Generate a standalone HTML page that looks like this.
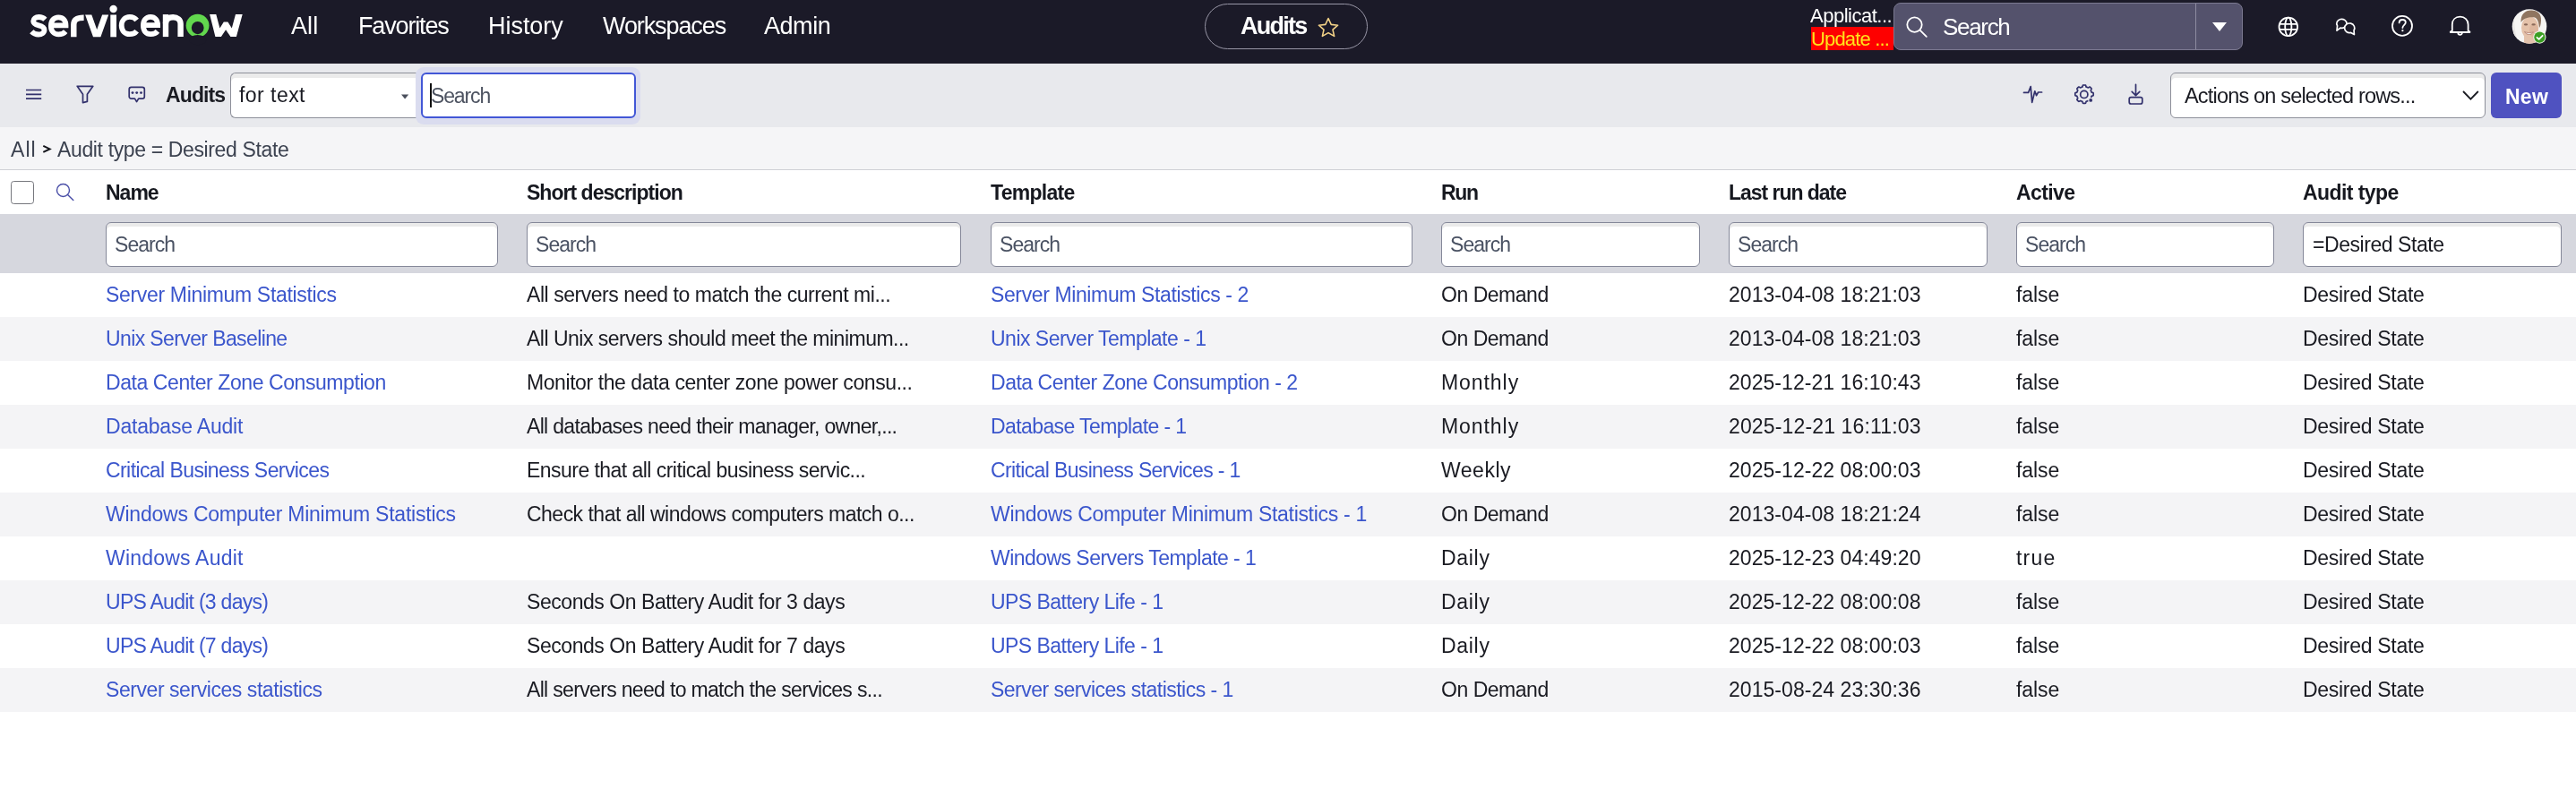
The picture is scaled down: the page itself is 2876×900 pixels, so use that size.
<!DOCTYPE html><html><head><meta charset="utf-8"><style>
html,body{margin:0;padding:0;width:2876px;height:900px;overflow:hidden;background:#fff;font-family:"Liberation Sans",sans-serif;}
.t{position:absolute;white-space:nowrap;will-change:transform;}
.r{position:absolute;box-sizing:border-box;}
svg.ov{position:absolute;left:0;top:0;overflow:visible;}
</style></head><body>
<div class="r" style="left:0px;top:0px;width:2876px;height:71px;background:#1b1a28"></div>
<div class="t" style="left:325px;top:16.1px;font-size:27px;line-height:27px;color:#fff;font-weight:normal;letter-spacing:0.100px;">All</div>
<div class="t" style="left:400.4px;top:16.1px;font-size:27px;line-height:27px;color:#fff;font-weight:normal;letter-spacing:-1.150px;">Favorites</div>
<div class="t" style="left:545.4px;top:16.1px;font-size:27px;line-height:27px;color:#fff;font-weight:normal;letter-spacing:-0.033px;">History</div>
<div class="t" style="left:672.7px;top:16.1px;font-size:27px;line-height:27px;color:#fff;font-weight:normal;letter-spacing:-1.100px;">Workspaces</div>
<div class="t" style="left:853px;top:16.1px;font-size:27px;line-height:27px;color:#fff;font-weight:normal;letter-spacing:-0.450px;">Admin</div>
<div class="r" style="left:1345px;top:4px;width:182px;height:51px;border:1.2px solid #9896a6;border-radius:26px;"></div>
<div class="t" style="left:1384.5px;top:16.1px;font-size:27px;line-height:27px;color:#fff;font-weight:bold;letter-spacing:-1.760px;">Audits</div>
<div class="t" style="left:2021px;top:6.7px;font-size:22px;line-height:22px;color:#fff;font-weight:normal;letter-spacing:-0.490px;">Applicat...</div>
<div class="r" style="left:2022px;top:30px;width:92px;height:26px;background:#fe0000"></div>
<div class="t" style="left:2022px;top:32.9px;font-size:22px;line-height:22px;color:#ffe41a;font-weight:normal;letter-spacing:-0.833px;">Update ...</div>
<div class="r" style="left:2114px;top:3px;width:390px;height:53px;background:#54526c;border:1px solid #7b7990;border-radius:8px;"></div>
<div class="r" style="left:2451px;top:4px;width:1.2px;height:51px;background:#8d8ba0"></div>
<div class="t" style="left:2169px;top:17.3px;font-size:26px;line-height:26px;color:#fff;font-weight:normal;letter-spacing:-1.320px;">Search</div>
<div class="r" style="left:0px;top:71px;width:2876px;height:71px;background:#e8e9ed"></div>
<div class="t" style="left:184.5px;top:95.2px;font-size:23px;line-height:23px;color:#1a1b22;font-weight:bold;letter-spacing:-0.880px;">Audits</div>
<div class="r" style="left:257px;top:81px;width:214px;height:51px;background:#fff;border:1px solid #8d8f99;border-right:none;border-radius:6px 0 0 6px;box-shadow:inset 0 5px 0 #ebebeb;"></div>
<div class="t" style="left:267px;top:95.2px;font-size:23px;line-height:23px;color:#1a1b22;font-weight:normal;letter-spacing:0.457px;">for text</div>
<div class="r" style="left:464px;top:75px;width:251px;height:64px;border-radius:9px;background:#dadcef"></div>
<div class="r" style="left:470px;top:81px;width:240px;height:51px;background:#fff;border:2.5px solid #4257d6;border-radius:6px;"></div>
<div class="r" style="left:480px;top:93px;width:2px;height:27px;background:#111"></div>
<div class="t" style="left:481px;top:96.0px;font-size:23px;line-height:23px;color:#4d5361;font-weight:normal;letter-spacing:-1.140px;">Search</div>
<div class="r" style="left:2423px;top:81px;width:352px;height:51px;background:#fff;border:1px solid #8d8f99;border-radius:6px;box-shadow:inset 0 5px 0 #ebebeb;"></div>
<div class="t" style="left:2439px;top:96.1px;font-size:23.5px;line-height:23.5px;color:#1a1b22;font-weight:normal;letter-spacing:-0.819px;">Actions on selected rows...</div>
<div class="r" style="left:2781px;top:81px;width:79px;height:51px;background:#4f52c0;border-radius:6px;"></div>
<div class="t" style="left:2797px;top:96.5px;font-size:23px;line-height:23px;color:#fff;font-weight:bold;letter-spacing:0.250px;">New</div>
<div class="r" style="left:0px;top:142px;width:2876px;height:47px;background:#f5f5f7"></div>
<div class="r" style="left:0px;top:189px;width:2876px;height:1px;background:#cfd0d6"></div>
<div class="t" style="left:11.5px;top:155.5px;font-size:23px;line-height:23px;color:#3c4250;font-weight:normal;letter-spacing:1.050px;">All</div>
<div class="t" style="left:64.3px;top:155.5px;font-size:23px;line-height:23px;color:#3c4250;font-weight:normal;letter-spacing:-0.364px;">Audit type = Desired State</div>
<div class="r" style="left:12px;top:202px;width:26px;height:26px;background:#fff;border:1.5px solid #76777d;border-radius:3.5px;"></div>
<div class="t" style="left:117.5px;top:204.4px;font-size:23px;line-height:23px;color:#16181f;font-weight:bold;letter-spacing:-1.000px;">Name</div>
<div class="t" style="left:587.5px;top:204.4px;font-size:23px;line-height:23px;color:#16181f;font-weight:bold;letter-spacing:-0.975px;">Short description</div>
<div class="t" style="left:1105.5px;top:204.4px;font-size:23px;line-height:23px;color:#16181f;font-weight:bold;letter-spacing:-0.700px;">Template</div>
<div class="t" style="left:1608.5px;top:204.4px;font-size:23px;line-height:23px;color:#16181f;font-weight:bold;letter-spacing:-1.350px;">Run</div>
<div class="t" style="left:1929.5px;top:204.4px;font-size:23px;line-height:23px;color:#16181f;font-weight:bold;letter-spacing:-1.033px;">Last run date</div>
<div class="t" style="left:2250.5px;top:204.4px;font-size:23px;line-height:23px;color:#16181f;font-weight:bold;letter-spacing:-0.600px;">Active</div>
<div class="t" style="left:2570.5px;top:204.4px;font-size:23px;line-height:23px;color:#16181f;font-weight:bold;letter-spacing:-0.578px;">Audit type</div>
<div class="r" style="left:0px;top:239px;width:2876px;height:66px;background:#d6d7de"></div>
<div class="r" style="left:118px;top:248px;width:438px;height:50px;background:#fff;border:1px solid #858899;border-radius:6px;box-shadow:inset 0 4px 0 #ebebeb;"></div>
<div class="t" style="left:128px;top:262.1px;font-size:23px;line-height:23px;color:#4a5263;font-weight:normal;letter-spacing:-0.960px;">Search</div>
<div class="r" style="left:588px;top:248px;width:485px;height:50px;background:#fff;border:1px solid #858899;border-radius:6px;box-shadow:inset 0 4px 0 #ebebeb;"></div>
<div class="t" style="left:598px;top:262.1px;font-size:23px;line-height:23px;color:#4a5263;font-weight:normal;letter-spacing:-0.960px;">Search</div>
<div class="r" style="left:1106px;top:248px;width:471px;height:50px;background:#fff;border:1px solid #858899;border-radius:6px;box-shadow:inset 0 4px 0 #ebebeb;"></div>
<div class="t" style="left:1116px;top:262.1px;font-size:23px;line-height:23px;color:#4a5263;font-weight:normal;letter-spacing:-0.960px;">Search</div>
<div class="r" style="left:1609px;top:248px;width:289px;height:50px;background:#fff;border:1px solid #858899;border-radius:6px;box-shadow:inset 0 4px 0 #ebebeb;"></div>
<div class="t" style="left:1619px;top:262.1px;font-size:23px;line-height:23px;color:#4a5263;font-weight:normal;letter-spacing:-0.960px;">Search</div>
<div class="r" style="left:1930px;top:248px;width:289px;height:50px;background:#fff;border:1px solid #858899;border-radius:6px;box-shadow:inset 0 4px 0 #ebebeb;"></div>
<div class="t" style="left:1940px;top:262.1px;font-size:23px;line-height:23px;color:#4a5263;font-weight:normal;letter-spacing:-0.960px;">Search</div>
<div class="r" style="left:2251px;top:248px;width:288px;height:50px;background:#fff;border:1px solid #858899;border-radius:6px;box-shadow:inset 0 4px 0 #ebebeb;"></div>
<div class="t" style="left:2261px;top:262.1px;font-size:23px;line-height:23px;color:#4a5263;font-weight:normal;letter-spacing:-0.960px;">Search</div>
<div class="r" style="left:2571px;top:248px;width:289px;height:50px;background:#fff;border:1px solid #858899;border-radius:6px;box-shadow:inset 0 4px 0 #ebebeb;"></div>
<div class="t" style="left:2581.5px;top:262.1px;font-size:23px;line-height:23px;color:#1a1b22;font-weight:normal;letter-spacing:-0.446px;">=Desired State</div>
<div class="t" style="left:117.5px;top:318.0px;font-size:23px;line-height:23px;color:#3b56cc;font-weight:normal;letter-spacing:-0.329px;">Server Minimum Statistics</div>
<div class="t" style="left:587.5px;top:318.0px;font-size:23px;line-height:23px;color:#1a1b22;font-weight:normal;letter-spacing:-0.452px;">All servers need to match the current mi...</div>
<div class="t" style="left:1105.5px;top:318.0px;font-size:23px;line-height:23px;color:#3b56cc;font-weight:normal;letter-spacing:-0.382px;">Server Minimum Statistics - 2</div>
<div class="t" style="left:1608.5px;top:318.0px;font-size:23px;line-height:23px;color:#1a1b22;font-weight:normal;letter-spacing:-0.475px;">On Demand</div>
<div class="t" style="left:1929.5px;top:318.0px;font-size:23px;line-height:23px;color:#1a1b22;font-weight:normal;letter-spacing:0.050px;">2013-04-08 18:21:03</div>
<div class="t" style="left:2250.5px;top:318.0px;font-size:23px;line-height:23px;color:#1a1b22;font-weight:normal;letter-spacing:-0.100px;">false</div>
<div class="t" style="left:2570.5px;top:318.0px;font-size:23px;line-height:23px;color:#1a1b22;font-weight:normal;letter-spacing:-0.292px;">Desired State</div>
<div class="r" style="left:0px;top:354px;width:2876px;height:49px;background:#f4f4f6"></div>
<div class="t" style="left:117.5px;top:367.0px;font-size:23px;line-height:23px;color:#3b56cc;font-weight:normal;letter-spacing:-0.611px;">Unix Server Baseline</div>
<div class="t" style="left:587.5px;top:367.0px;font-size:23px;line-height:23px;color:#1a1b22;font-weight:normal;letter-spacing:-0.510px;">All Unix servers should meet the minimum...</div>
<div class="t" style="left:1105.5px;top:367.0px;font-size:23px;line-height:23px;color:#3b56cc;font-weight:normal;letter-spacing:-0.509px;">Unix Server Template - 1</div>
<div class="t" style="left:1608.5px;top:367.0px;font-size:23px;line-height:23px;color:#1a1b22;font-weight:normal;letter-spacing:-0.475px;">On Demand</div>
<div class="t" style="left:1929.5px;top:367.0px;font-size:23px;line-height:23px;color:#1a1b22;font-weight:normal;letter-spacing:0.050px;">2013-04-08 18:21:03</div>
<div class="t" style="left:2250.5px;top:367.0px;font-size:23px;line-height:23px;color:#1a1b22;font-weight:normal;letter-spacing:-0.100px;">false</div>
<div class="t" style="left:2570.5px;top:367.0px;font-size:23px;line-height:23px;color:#1a1b22;font-weight:normal;letter-spacing:-0.292px;">Desired State</div>
<div class="t" style="left:117.5px;top:416.0px;font-size:23px;line-height:23px;color:#3b56cc;font-weight:normal;letter-spacing:-0.426px;">Data Center Zone Consumption</div>
<div class="t" style="left:587.5px;top:416.0px;font-size:23px;line-height:23px;color:#1a1b22;font-weight:normal;letter-spacing:-0.424px;">Monitor the data center zone power consu...</div>
<div class="t" style="left:1105.5px;top:416.0px;font-size:23px;line-height:23px;color:#3b56cc;font-weight:normal;letter-spacing:-0.481px;">Data Center Zone Consumption - 2</div>
<div class="t" style="left:1608.5px;top:416.0px;font-size:23px;line-height:23px;color:#1a1b22;font-weight:normal;letter-spacing:0.933px;">Monthly</div>
<div class="t" style="left:1929.5px;top:416.0px;font-size:23px;line-height:23px;color:#1a1b22;font-weight:normal;letter-spacing:0.050px;">2025-12-21 16:10:43</div>
<div class="t" style="left:2250.5px;top:416.0px;font-size:23px;line-height:23px;color:#1a1b22;font-weight:normal;letter-spacing:-0.100px;">false</div>
<div class="t" style="left:2570.5px;top:416.0px;font-size:23px;line-height:23px;color:#1a1b22;font-weight:normal;letter-spacing:-0.292px;">Desired State</div>
<div class="r" style="left:0px;top:452px;width:2876px;height:49px;background:#f4f4f6"></div>
<div class="t" style="left:117.5px;top:465.0px;font-size:23px;line-height:23px;color:#3b56cc;font-weight:normal;letter-spacing:-0.200px;">Database Audit</div>
<div class="t" style="left:587.5px;top:465.0px;font-size:23px;line-height:23px;color:#1a1b22;font-weight:normal;letter-spacing:-0.676px;">All databases need their manager, owner,...</div>
<div class="t" style="left:1105.5px;top:465.0px;font-size:23px;line-height:23px;color:#3b56cc;font-weight:normal;letter-spacing:-0.595px;">Database Template - 1</div>
<div class="t" style="left:1608.5px;top:465.0px;font-size:23px;line-height:23px;color:#1a1b22;font-weight:normal;letter-spacing:0.933px;">Monthly</div>
<div class="t" style="left:1929.5px;top:465.0px;font-size:23px;line-height:23px;color:#1a1b22;font-weight:normal;letter-spacing:0.144px;">2025-12-21 16:11:03</div>
<div class="t" style="left:2250.5px;top:465.0px;font-size:23px;line-height:23px;color:#1a1b22;font-weight:normal;letter-spacing:-0.100px;">false</div>
<div class="t" style="left:2570.5px;top:465.0px;font-size:23px;line-height:23px;color:#1a1b22;font-weight:normal;letter-spacing:-0.292px;">Desired State</div>
<div class="t" style="left:117.5px;top:514.0px;font-size:23px;line-height:23px;color:#3b56cc;font-weight:normal;letter-spacing:-0.584px;">Critical Business Services</div>
<div class="t" style="left:587.5px;top:514.0px;font-size:23px;line-height:23px;color:#1a1b22;font-weight:normal;letter-spacing:-0.540px;">Ensure that all critical business servic...</div>
<div class="t" style="left:1105.5px;top:514.0px;font-size:23px;line-height:23px;color:#3b56cc;font-weight:normal;letter-spacing:-0.638px;">Critical Business Services - 1</div>
<div class="t" style="left:1608.5px;top:514.0px;font-size:23px;line-height:23px;color:#1a1b22;font-weight:normal;letter-spacing:0.520px;">Weekly</div>
<div class="t" style="left:1929.5px;top:514.0px;font-size:23px;line-height:23px;color:#1a1b22;font-weight:normal;letter-spacing:0.050px;">2025-12-22 08:00:03</div>
<div class="t" style="left:2250.5px;top:514.0px;font-size:23px;line-height:23px;color:#1a1b22;font-weight:normal;letter-spacing:-0.100px;">false</div>
<div class="t" style="left:2570.5px;top:514.0px;font-size:23px;line-height:23px;color:#1a1b22;font-weight:normal;letter-spacing:-0.292px;">Desired State</div>
<div class="r" style="left:0px;top:550px;width:2876px;height:49px;background:#f4f4f6"></div>
<div class="t" style="left:117.5px;top:563.0px;font-size:23px;line-height:23px;color:#3b56cc;font-weight:normal;letter-spacing:-0.226px;">Windows Computer Minimum Statistics</div>
<div class="t" style="left:587.5px;top:563.0px;font-size:23px;line-height:23px;color:#1a1b22;font-weight:normal;letter-spacing:-0.517px;">Check that all windows computers match o...</div>
<div class="t" style="left:1105.5px;top:563.0px;font-size:23px;line-height:23px;color:#3b56cc;font-weight:normal;letter-spacing:-0.311px;">Windows Computer Minimum Statistics - 1</div>
<div class="t" style="left:1608.5px;top:563.0px;font-size:23px;line-height:23px;color:#1a1b22;font-weight:normal;letter-spacing:-0.475px;">On Demand</div>
<div class="t" style="left:1929.5px;top:563.0px;font-size:23px;line-height:23px;color:#1a1b22;font-weight:normal;letter-spacing:0.050px;">2013-04-08 18:21:24</div>
<div class="t" style="left:2250.5px;top:563.0px;font-size:23px;line-height:23px;color:#1a1b22;font-weight:normal;letter-spacing:-0.100px;">false</div>
<div class="t" style="left:2570.5px;top:563.0px;font-size:23px;line-height:23px;color:#1a1b22;font-weight:normal;letter-spacing:-0.292px;">Desired State</div>
<div class="t" style="left:117.5px;top:612.0px;font-size:23px;line-height:23px;color:#3b56cc;font-weight:normal;letter-spacing:0.208px;">Windows Audit</div>
<div class="t" style="left:1105.5px;top:612.0px;font-size:23px;line-height:23px;color:#3b56cc;font-weight:normal;letter-spacing:-0.541px;">Windows Servers Template - 1</div>
<div class="t" style="left:1608.5px;top:612.0px;font-size:23px;line-height:23px;color:#1a1b22;font-weight:normal;letter-spacing:0.700px;">Daily</div>
<div class="t" style="left:1929.5px;top:612.0px;font-size:23px;line-height:23px;color:#1a1b22;font-weight:normal;letter-spacing:0.050px;">2025-12-23 04:49:20</div>
<div class="t" style="left:2250.5px;top:612.0px;font-size:23px;line-height:23px;color:#1a1b22;font-weight:normal;letter-spacing:1.233px;">true</div>
<div class="t" style="left:2570.5px;top:612.0px;font-size:23px;line-height:23px;color:#1a1b22;font-weight:normal;letter-spacing:-0.292px;">Desired State</div>
<div class="r" style="left:0px;top:648px;width:2876px;height:49px;background:#f4f4f6"></div>
<div class="t" style="left:117.5px;top:661.0px;font-size:23px;line-height:23px;color:#3b56cc;font-weight:normal;letter-spacing:-0.729px;">UPS Audit (3 days)</div>
<div class="t" style="left:587.5px;top:661.0px;font-size:23px;line-height:23px;color:#1a1b22;font-weight:normal;letter-spacing:-0.444px;">Seconds On Battery Audit for 3 days</div>
<div class="t" style="left:1105.5px;top:661.0px;font-size:23px;line-height:23px;color:#3b56cc;font-weight:normal;letter-spacing:-0.542px;">UPS Battery Life - 1</div>
<div class="t" style="left:1608.5px;top:661.0px;font-size:23px;line-height:23px;color:#1a1b22;font-weight:normal;letter-spacing:0.700px;">Daily</div>
<div class="t" style="left:1929.5px;top:661.0px;font-size:23px;line-height:23px;color:#1a1b22;font-weight:normal;letter-spacing:0.050px;">2025-12-22 08:00:08</div>
<div class="t" style="left:2250.5px;top:661.0px;font-size:23px;line-height:23px;color:#1a1b22;font-weight:normal;letter-spacing:-0.100px;">false</div>
<div class="t" style="left:2570.5px;top:661.0px;font-size:23px;line-height:23px;color:#1a1b22;font-weight:normal;letter-spacing:-0.292px;">Desired State</div>
<div class="t" style="left:117.5px;top:710.0px;font-size:23px;line-height:23px;color:#3b56cc;font-weight:normal;letter-spacing:-0.729px;">UPS Audit (7 days)</div>
<div class="t" style="left:587.5px;top:710.0px;font-size:23px;line-height:23px;color:#1a1b22;font-weight:normal;letter-spacing:-0.444px;">Seconds On Battery Audit for 7 days</div>
<div class="t" style="left:1105.5px;top:710.0px;font-size:23px;line-height:23px;color:#3b56cc;font-weight:normal;letter-spacing:-0.542px;">UPS Battery Life - 1</div>
<div class="t" style="left:1608.5px;top:710.0px;font-size:23px;line-height:23px;color:#1a1b22;font-weight:normal;letter-spacing:0.700px;">Daily</div>
<div class="t" style="left:1929.5px;top:710.0px;font-size:23px;line-height:23px;color:#1a1b22;font-weight:normal;letter-spacing:0.050px;">2025-12-22 08:00:03</div>
<div class="t" style="left:2250.5px;top:710.0px;font-size:23px;line-height:23px;color:#1a1b22;font-weight:normal;letter-spacing:-0.100px;">false</div>
<div class="t" style="left:2570.5px;top:710.0px;font-size:23px;line-height:23px;color:#1a1b22;font-weight:normal;letter-spacing:-0.292px;">Desired State</div>
<div class="r" style="left:0px;top:746px;width:2876px;height:49px;background:#f4f4f6"></div>
<div class="t" style="left:117.5px;top:759.0px;font-size:23px;line-height:23px;color:#3b56cc;font-weight:normal;letter-spacing:-0.440px;">Server services statistics</div>
<div class="t" style="left:587.5px;top:759.0px;font-size:23px;line-height:23px;color:#1a1b22;font-weight:normal;letter-spacing:-0.669px;">All servers need to match the services s...</div>
<div class="t" style="left:1105.5px;top:759.0px;font-size:23px;line-height:23px;color:#3b56cc;font-weight:normal;letter-spacing:-0.514px;">Server services statistics - 1</div>
<div class="t" style="left:1608.5px;top:759.0px;font-size:23px;line-height:23px;color:#1a1b22;font-weight:normal;letter-spacing:-0.475px;">On Demand</div>
<div class="t" style="left:1929.5px;top:759.0px;font-size:23px;line-height:23px;color:#1a1b22;font-weight:normal;letter-spacing:0.050px;">2015-08-24 23:30:36</div>
<div class="t" style="left:2250.5px;top:759.0px;font-size:23px;line-height:23px;color:#1a1b22;font-weight:normal;letter-spacing:-0.100px;">false</div>
<div class="t" style="left:2570.5px;top:759.0px;font-size:23px;line-height:23px;color:#1a1b22;font-weight:normal;letter-spacing:-0.292px;">Desired State</div>
<svg class="ov" width="2876" height="900" viewBox="0 0 2876 900">
<!-- logo -->
<g fill="none" stroke="#ffffff" stroke-width="5.8">
 <path d="M50.4 21.8 C48.6 19.9 46.2 19 43.3 19 C39.7 19 37.2 20.9 37.2 23.6 C37.2 26.6 39.8 27.6 43.2 28.4 C47 29.3 49.5 30.5 49.5 33.6 C49.5 36.7 46.7 38.5 43 38.5 C39.8 38.5 37.2 37.4 35.3 35.3"/>
 <path d="M56.9 28.45 H73.5 C73.5 22.6 70.2 19.3 65.2 19.3 C60.1 19.3 56.9 23.2 56.9 28.9 C56.9 34.8 60.3 38.4 65.4 38.4 C68.8 38.4 71.4 37.2 73.2 35.1"/>
 <path d="M152.7 22.5 C150.9 20.2 148.2 18.9 144.8 18.9 C139.4 18.9 135.7 23 135.7 28.6 C135.7 34.2 139.4 38.2 144.8 38.2 C148.2 38.2 150.9 37 152.7 34.7"/>
 <path d="M159.9 28.2 H176.1 C176.1 22.4 172.9 18.9 168 18.9 C162.9 18.9 159.9 22.9 159.9 28.6 C159.9 34.5 163.1 38.2 168.2 38.2 C171.6 38.2 174.2 37 175.9 34.9"/>
</g>
<g fill="none" stroke="#ffffff" stroke-width="6.4">
 <path d="M82.3 41.3 V27.5 C82.3 22 85.5 19.7 93.6 19.7"/>
 <path d="M185 41.1 V16.1"/>
 <path d="M185 26.2 C185 21.8 188.6 19.3 193.2 19.3 C198 19.3 201.6 21.8 201.6 26.6 V41.1"/>
</g>
<polygon fill="#ffffff" points="95.1,16.5 102.3,16.5 108.2,33 114.1,16.5 121.2,16.5 112.4,41.3 104,41.3"/>
<rect x="123.3" y="16.5" width="6.7" height="24.8" fill="#ffffff"/>
<circle cx="126.6" cy="10" r="4.2" fill="#ffffff"/>
<polygon fill="#ffffff" points="234.1,16.1 241.3,16.1 245.4,31.5 249.8,24.6 254.4,24.6 258.8,31.5 263,16.1 270.7,16.1 263.9,41.1 257.4,41.1 252.1,33.2 246.9,41.1 240.4,41.1"/>
<g>
 <circle cx="220.6" cy="28.6" r="12.9" fill="#62d84e"/>
 <ellipse cx="220.7" cy="31.1" rx="6.9" ry="7.1" fill="#1b1a28"/>
 <ellipse cx="220.7" cy="44.6" rx="9.6" ry="5.6" fill="#1b1a28"/>
</g>
<!-- star -->
<path d="M1483 20.5 L1486.2 27.4 L1493.6 28.2 L1488 33.1 L1489.6 40.4 L1483 36.6 L1476.4 40.4 L1478 33.1 L1472.4 28.2 L1479.8 27.4 Z" fill="none" stroke="#f3d287" stroke-width="1.6" stroke-linejoin="round"/>
<!-- header search icon -->
<g fill="none" stroke="#ffffff" stroke-width="1.8">
 <circle cx="2137.5" cy="27.6" r="8.2"/>
 <path d="M2143.5 33.6 L2150.8 40.8" stroke-linecap="round"/>
</g>
<path d="M2470 25 H2486 L2478 35 Z" fill="#ffffff"/>
<!-- globe -->
<g fill="none" stroke="#ffffff" stroke-width="1.8">
 <circle cx="2554.8" cy="29.9" r="10.3"/>
 <ellipse cx="2554.8" cy="29.9" rx="3.6" ry="10.3"/>
 <path d="M2545 26.9 H2564.6 M2545 32.9 H2564.6"/>
</g>
<!-- chat bubbles -->
<g stroke="#ffffff" stroke-width="1.7" stroke-linejoin="round">
 <path fill="none" d="M2612.95 31.13 L2609.0 34.2 L2609.55 28.8 A5.6 5 0 1 1 2612.95 31.13 Z"/>
 <path fill="#1b1a28" d="M2624.65 36.42 L2628.4 38.6 L2628.05 33.95 A5.6 5.3 0 1 0 2624.65 36.42 Z"/>
</g>
<!-- help -->
<g fill="none" stroke="#ffffff" stroke-width="1.8">
 <circle cx="2682" cy="28.9" r="11"/>
 <path d="M2678.6 25.4 C2678.6 23.2 2680.2 22 2682.2 22 C2684.3 22 2685.8 23.3 2685.8 25.1 C2685.8 27.8 2682.4 28 2682.4 31" stroke-linecap="round"/>
</g>
<circle cx="2682.4" cy="34.2" r="1.1" fill="#ffffff"/>
<!-- bell -->
<g fill="none" stroke="#ffffff" stroke-width="1.8" stroke-linejoin="round">
 <path d="M2737.8 34.2 V27.5 C2737.8 22 2741.5 18.7 2746.6 18.7 C2751.7 18.7 2755.6 22 2755.6 27.5 V34.2 L2757.4 35.4 V36 H2735.8 V35.4 Z"/>
 <path d="M2744.3 36.6 A2.3 2.3 0 0 0 2748.9 36.6"/>
</g>
<!-- avatar -->
<defs><clipPath id="av"><circle cx="2824" cy="29.5" r="19.3"/></clipPath></defs>
<g clip-path="url(#av)">
 <rect x="2804" y="9" width="41" height="41" fill="#f6f5f3"/>
 <path d="M2806 20 C2808 30 2808 40 2812 48 L2806 48 Z" fill="#e9e7e4"/>
 <rect x="2818" y="40" width="14" height="10" fill="#e3c3ad"/>
 <ellipse cx="2824.6" cy="31" rx="9.6" ry="12.6" fill="#e4c2aa"/>
 <ellipse cx="2829" cy="34" rx="5" ry="8" fill="#d9ae94" opacity="0.6"/>
 <path d="M2814.6 25 C2814 16 2819 11.5 2826 11.5 C2833 11.5 2837.5 15.5 2837 23 C2836.8 27 2836 30 2835 31 C2834.5 26 2833.5 21 2830 19.5 C2825 18.5 2818 19.5 2814.6 25 Z" fill="#8f7560"/>
 <ellipse cx="2820" cy="27.4" rx="2.2" ry="1.1" fill="#8a6a5a"/>
 <ellipse cx="2828.6" cy="27.4" rx="2.2" ry="1.1" fill="#8a6a5a"/>
 <path d="M2818.5 35.5 C2821 39.5 2826 39.5 2828.5 35.8 C2825 36.8 2821.5 36.8 2818.5 35.5 Z" fill="#f4ece6" stroke="#b88474" stroke-width="0.9"/>
</g>
<circle cx="2835.4" cy="41.6" r="7.1" fill="#eef4e6"/>
<circle cx="2835.4" cy="41.6" r="6.1" fill="#3a9e22"/>
<path d="M2832.4 41.8 L2834.6 43.8 L2838.6 39.8" fill="none" stroke="#fff" stroke-width="1.8" stroke-linecap="round" stroke-linejoin="round"/>

<!-- toolbar icons -->
<g fill="none" stroke="#32316c" stroke-width="1.7">
 <path d="M29 100.5 H46.2 M29 105.4 H46.2 M29 110.2 H46.2"/>
 <path d="M86.2 96.3 H103.8 L97.4 105.2 V113.4 L92.5 114.6 V105.2 Z" stroke-linejoin="round"/>
 <path d="M146.6 97.4 H158.9 A2.4 2.4 0 0 1 161.3 99.8 V107.7 A2.4 2.4 0 0 1 158.9 110.1 H154.7 L152.6 113.6 L150.5 110.1 H146.6 A2.4 2.4 0 0 1 144.2 107.7 V99.8 A2.4 2.4 0 0 1 146.6 97.4 Z" stroke-linejoin="round"/>
</g>
<g fill="#32316c"><circle cx="148" cy="103.6" r="1.45"/><circle cx="152.7" cy="103.6" r="1.45"/><circle cx="157.5" cy="103.6" r="1.45"/></g>
<g fill="none" stroke="#32316c" stroke-width="1.7" stroke-linejoin="round" stroke-linecap="round">
 <path d="M2259.5 103.4 H2264.6 L2267.2 96.6 L2268.7 114.4 L2271.8 101.8 L2273.6 106.6 L2275.6 103 H2279.6"/>
 <path d="M2384.5 94.4 V106.4 M2380.2 102.4 L2384.5 106.6 L2388.8 102.4"/>
 <rect x="2377.2" y="108.6" width="14.6" height="7.4" rx="2"/>
</g>
<g fill="none" stroke="#32316c" stroke-width="1.7" stroke-linejoin="round" stroke-linecap="round">
 <circle cx="2326.8" cy="105.4" r="4.1"/>
 <path d="M2330.68 112.75 L2330.55 112.81 L2330.42 112.87 L2330.28 112.93 L2330.15 112.99 L2330.01 113.04 L2329.87 113.09 L2329.73 113.14 L2329.60 113.19 L2329.46 113.23 L2329.32 113.27 L2329.18 113.32 L2329.06 113.46 L2328.96 113.71 L2328.88 114.04 L2328.79 114.41 L2328.69 114.77 L2328.56 115.07 L2328.41 115.26 L2328.24 115.32 L2328.07 115.34 L2327.89 115.36 L2327.71 115.38 L2327.53 115.39 L2327.36 115.39 L2327.18 115.40 L2327.00 115.40 L2326.82 115.40 L2326.64 115.39 L2326.47 115.39 L2326.29 115.38 L2326.11 115.36 L2325.93 115.34 L2325.76 115.32 L2325.59 115.26 L2325.44 115.07 L2325.31 114.77 L2325.21 114.41 L2325.12 114.04 L2325.04 113.71 L2324.94 113.46 L2324.82 113.32 L2324.68 113.27 L2324.54 113.23 L2324.40 113.19 L2324.27 113.14 L2324.13 113.09 L2323.99 113.04 L2323.85 112.99 L2323.72 112.93 L2323.58 112.87 L2323.45 112.81 L2323.32 112.75 L2323.19 112.68 L2323.06 112.62 L2322.93 112.55 L2322.80 112.48 L2322.62 112.50 L2322.37 112.61 L2322.08 112.78 L2321.75 112.98 L2321.43 113.16 L2321.13 113.28 L2320.89 113.31 L2320.72 113.24 L2320.58 113.13 L2320.44 113.01 L2320.31 112.90 L2320.17 112.78 L2320.04 112.66 L2319.91 112.54 L2319.79 112.41 L2319.66 112.29 L2319.54 112.16 L2319.42 112.03 L2319.30 111.89 L2319.19 111.76 L2319.07 111.62 L2318.96 111.48 L2318.89 111.31 L2318.92 111.07 L2319.04 110.77 L2319.22 110.45 L2319.42 110.12 L2319.59 109.83 L2319.70 109.58 L2319.72 109.40 L2319.65 109.27 L2319.58 109.14 L2319.52 109.01 L2319.45 108.88 L2319.39 108.75 L2319.33 108.62 L2319.27 108.48 L2319.21 108.35 L2319.16 108.21 L2319.11 108.07 L2319.06 107.93 L2319.01 107.80 L2318.97 107.66 L2318.93 107.52 L2318.88 107.38 L2318.74 107.26 L2318.49 107.16 L2318.16 107.08 L2317.79 106.99 L2317.43 106.89 L2317.13 106.76 L2316.94 106.61 L2316.88 106.44 L2316.86 106.27 L2316.84 106.09 L2316.82 105.91 L2316.81 105.73 L2316.81 105.56 L2316.80 105.38 L2316.80 105.20 L2316.80 105.02 L2316.81 104.84 L2316.81 104.67 L2316.82 104.49 L2316.84 104.31 L2316.86 104.13 L2316.88 103.96 L2316.94 103.79 L2317.13 103.64 L2317.43 103.51 L2317.79 103.41 L2318.16 103.32 L2318.49 103.24 L2318.74 103.14 L2318.88 103.02 L2318.93 102.88 L2318.97 102.74 L2319.01 102.60 L2319.06 102.47 L2319.11 102.33 L2319.16 102.19 L2319.21 102.05 L2319.27 101.92 L2319.33 101.78 L2319.39 101.65 L2319.45 101.52 L2319.52 101.39 L2319.58 101.26 L2319.65 101.13 L2319.72 101.00 L2319.70 100.82 L2319.59 100.57 L2319.42 100.28 L2319.22 99.95 L2319.04 99.63 L2318.92 99.33 L2318.89 99.09 L2318.96 98.92 L2319.07 98.78 L2319.19 98.64 L2319.30 98.51 L2319.42 98.37 L2319.54 98.24 L2319.66 98.11 L2319.79 97.99 L2319.91 97.86 L2320.04 97.74 L2320.17 97.62 L2320.31 97.50 L2320.44 97.39 L2320.58 97.27 L2320.72 97.16 L2320.89 97.09 L2321.13 97.12 L2321.43 97.24 L2321.75 97.42 L2322.08 97.62 L2322.37 97.79 L2322.62 97.90 L2322.80 97.92 L2322.93 97.85 L2323.06 97.78 L2323.19 97.72 L2323.32 97.65 L2323.45 97.59 L2323.58 97.53 L2323.72 97.47 L2323.85 97.41 L2323.99 97.36 L2324.13 97.31 L2324.27 97.26 L2324.40 97.21 L2324.54 97.17 L2324.68 97.13 L2324.82 97.08 L2324.94 96.94 L2325.04 96.69 L2325.12 96.36 L2325.21 95.99 L2325.31 95.63 L2325.44 95.33 L2325.59 95.14 L2325.76 95.08 L2325.93 95.06 L2326.11 95.04 L2326.29 95.02 L2326.47 95.01 L2326.64 95.01 L2326.82 95.00 L2327.00 95.00 L2327.18 95.00 L2327.36 95.01 L2327.53 95.01 L2327.71 95.02 L2327.89 95.04 L2328.07 95.06 L2328.24 95.08 L2328.41 95.14 L2328.56 95.33 L2328.69 95.63 L2328.79 95.99 L2328.88 96.36 L2328.96 96.69 L2329.06 96.94 L2329.18 97.08 L2329.32 97.13 L2329.46 97.17 L2329.60 97.21 L2329.73 97.26 L2329.87 97.31 L2330.01 97.36 L2330.15 97.41 L2330.28 97.47 L2330.42 97.53 L2330.55 97.59 L2330.68 97.65 L2330.81 97.72 L2330.94 97.78 L2331.07 97.85 L2331.20 97.92 L2331.38 97.90 L2331.63 97.79 L2331.92 97.62 L2332.25 97.42 L2332.57 97.24 L2332.87 97.12 L2333.11 97.09 L2333.28 97.16 L2333.42 97.27 L2333.56 97.39 L2333.69 97.50 L2333.83 97.62 L2333.96 97.74 L2334.09 97.86 L2334.21 97.99 L2334.34 98.11 L2334.46 98.24 L2334.58 98.37 L2334.70 98.51 L2334.81 98.64 L2334.93 98.78 L2335.04 98.92 L2335.11 99.09 L2335.08 99.33 L2334.96 99.63 L2334.78 99.95 L2334.58 100.28 L2334.41 100.57 L2334.30 100.82 L2334.28 101.00 L2334.35 101.13 L2334.42 101.26 L2334.48 101.39 L2334.55 101.52 L2334.61 101.65 L2334.67 101.78 L2334.73 101.92 L2334.79 102.05 L2334.84 102.19 L2334.89 102.33 L2334.94 102.47 L2334.99 102.60 L2335.03 102.74 L2335.07 102.88 L2335.12 103.02 L2335.26 103.14 L2335.51 103.24 L2335.84 103.32 L2336.21 103.41 L2336.57 103.51 L2336.87 103.64 L2337.06 103.79 L2337.12 103.96 L2337.14 104.13 L2337.16 104.31 L2337.18 104.49 L2337.19 104.67 L2337.19 104.84 L2337.20 105.02 L2337.20 105.20 L2337.20 105.20 L2337.20 105.38 L2337.19 105.56 L2337.19 105.73 L2337.18 105.91 L2337.16 106.09 L2337.14 106.27 L2337.12 106.44 L2337.06 106.61 L2336.87 106.76 L2336.57 106.89 L2336.21 106.99 L2335.84 107.08 L2335.51 107.16 L2335.26 107.26 L2335.12 107.38 L2335.07 107.52 L2335.03 107.66 L2334.99 107.80 L2334.94 107.93 L2334.89 108.07 L2334.84 108.21 L2334.79 108.35"/>
</g>
<circle cx="2334.2" cy="111.9" r="1.9" fill="#32316c"/>
<!-- breadcrumb chevron -->
<path d="M48.3 162.9 L55.6 166.4 L48.3 169.9" fill="none" stroke="#15161c" stroke-width="2"/>
<!-- select caret / chevron -->
<path d="M448 105.4 H456.2 L452.1 110.5 Z" fill="#4a4f5c"/>
<path d="M2750 102 L2758.4 110.6 L2766.8 102" fill="none" stroke="#1a1b22" stroke-width="1.8"/>
<!-- header search icon in table -->
<g fill="none" stroke="#4b50a8" stroke-width="1.45">
 <circle cx="70.5" cy="212.4" r="7"/>
 <path d="M75.6 217.6 L81.8 223.6" stroke-linecap="round"/>
</g>
</svg>
</body></html>
